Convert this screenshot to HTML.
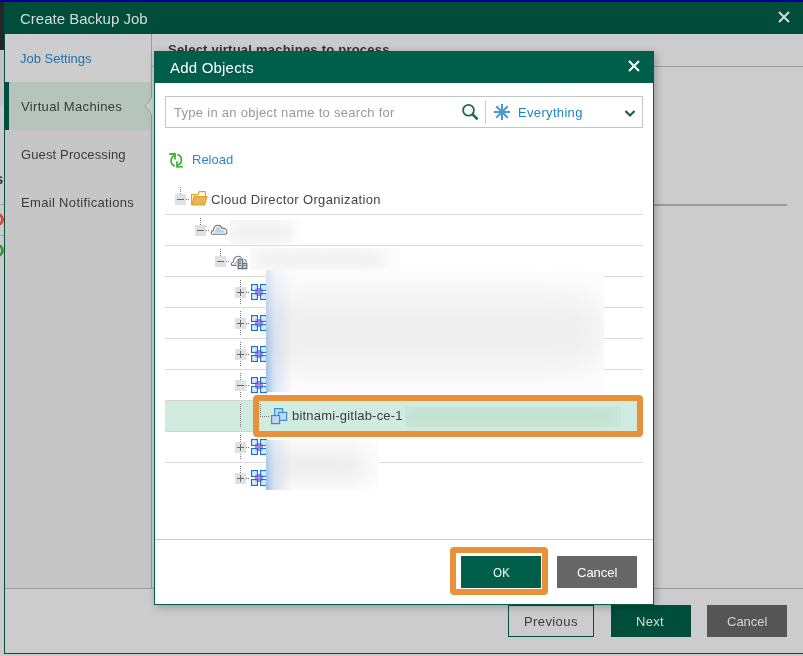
<!DOCTYPE html>
<html><head><meta charset="utf-8">
<style>
*{margin:0;padding:0;box-sizing:border-box}
html,body{width:803px;height:656px;overflow:hidden;background:#cbcbcb;font-family:"Liberation Sans",sans-serif}
.a{position:absolute}
.t{position:absolute;white-space:nowrap;line-height:1;will-change:transform}
</style></head><body>
<!-- background app -->
<div class="a" style="left:0;top:0;width:803px;height:2px;background:#00009a"></div>
<div class="a" style="left:0;top:2px;width:4px;height:48px;background:#262626"></div>
<div class="a" style="left:0;top:50px;width:4px;height:55px;background:#c2c2c2"></div>
<div class="t" style="left:-5px;top:171px;font-size:15px;font-weight:bold;color:#333">s</div>
<div class="a" style="left:0;top:204px;width:4px;height:1px;background:#aaa"></div>
<div class="a" style="left:-9px;top:213px;width:13px;height:13px;border:3px solid #d04a3a;border-radius:50%"></div>
<div class="a" style="left:0;top:235px;width:4px;height:1px;background:#aaa"></div>
<div class="a" style="left:-9px;top:244px;width:13px;height:13px;border:3px solid #3a9a3a;border-radius:50%"></div>

<!-- main dialog -->
<div class="a" style="left:4px;top:2px;width:810px;height:652px;border:1px solid #00503d;background:#cccccc"></div>
<div class="a" style="left:4px;top:2px;width:799px;height:32px;background:#004d3b"></div>
<div class="t" style="left:20px;top:11px;font-size:15px;color:#d5dcd8">Create Backup Job</div>
<svg class="a" style="left:778px;top:11px" width="12" height="12" viewBox="0 0 12 12"><path d="M1 1L11 11M11 1L1 11" stroke="#d8d8d8" stroke-width="2.1"/></svg>

<!-- nav -->
<div class="a" style="left:5px;top:34px;width:146px;height:554px;background:#c6c6c6"></div>
<div class="a" style="left:5px;top:34px;width:146px;height:48px;background:#cdcdcd"></div>
<div class="a" style="left:151px;top:34px;width:1px;height:554px;background:#9a9a9a"></div>
<div class="a" style="left:5px;top:82px;width:146px;height:48px;background:#b5c5bc"></div>
<div class="a" style="left:5px;top:82px;width:4px;height:48px;background:#00503c"></div>
<div class="t" style="left:20px;top:52px;font-size:13px;color:#1f70a8">Job Settings</div>
<div class="t" style="left:21px;top:100px;font-size:13px;letter-spacing:0.33px;color:#3a3a3a">Virtual Machines</div>
<div class="t" style="left:21px;top:148px;font-size:13px;letter-spacing:0.13px;color:#3a3a3a">Guest Processing</div>
<div class="t" style="left:21px;top:196px;font-size:13px;letter-spacing:0.33px;color:#3a3a3a">Email Notifications</div>
<svg class="a" style="left:144px;top:98px" width="9" height="16" viewBox="0 0 9 16"><path d="M7 1L1 8L7 15" fill="#cdcdcd" stroke="#9a9a9a" stroke-width="1"/><rect x="7" y="0" width="2" height="16" fill="#cdcdcd"/></svg>

<!-- right panel -->
<div class="a" style="left:152px;top:66px;width:651px;height:1px;background:#9c9c9c"></div>
<div class="t" style="left:168px;top:43px;font-size:13px;font-weight:bold;letter-spacing:0.23px;color:#333">Select virtual machines to process</div>
<div class="a" style="left:654px;top:204px;width:133px;height:2px;background:#9a9a9a"></div>
<div class="a" style="left:5px;top:588px;width:798px;height:1px;background:#9c9c9c"></div>

<!-- footer buttons -->
<div class="a" style="left:508px;top:605px;width:86px;height:32px;border:1px solid #00503d"></div>
<div class="t" style="left:524px;top:615px;font-size:13px;letter-spacing:0.4px;color:#3a3a3a">Previous</div>
<div class="a" style="left:611px;top:605px;width:80px;height:32px;background:#004d3b"></div>
<div class="t" style="left:636px;top:615px;font-size:13px;letter-spacing:0.3px;color:#d5dcd8">Next</div>
<div class="a" style="left:707px;top:605px;width:80px;height:32px;background:#555555"></div>
<div class="t" style="left:727px;top:615px;font-size:13px;color:#d5d5d5">Cancel</div>

<!-- Add Objects dialog -->
<div class="a" style="left:154px;top:51px;width:500px;height:554px;background:#fff;border:1px solid #005f4b;box-shadow:2px 2px 8px rgba(0,0,0,0.25)"></div>
<div class="a" style="left:154px;top:51px;width:500px;height:32px;background:#005f4b"></div>
<div class="t" style="left:170px;top:60px;font-size:15px;letter-spacing:0.2px;color:#fff">Add Objects</div>
<svg class="a" style="left:628px;top:60px" width="12" height="12" viewBox="0 0 12 12"><path d="M1 1L11 11M11 1L1 11" stroke="#fff" stroke-width="2.1"/></svg>

<!-- search -->
<div class="a" style="left:165px;top:96px;width:478px;height:32px;border:1px solid #c4c4c4"></div>
<div class="t" style="left:174px;top:106px;font-size:13px;letter-spacing:0.29px;color:#999">Type in an object name to search for</div>
<svg class="a" style="left:460px;top:102px" width="20" height="20" viewBox="0 0 20 20"><circle cx="8.5" cy="8.2" r="5.4" fill="none" stroke="#1f6b46" stroke-width="1.8"/><path d="M12.4 12.2L17.6 17.4" stroke="#1f6b46" stroke-width="2.6"/></svg>
<div class="a" style="left:485px;top:101px;width:1px;height:23px;background:#c8c8c8"></div>
<svg class="a" style="left:493px;top:103px" width="18" height="18" viewBox="0 0 18 18"><g stroke="#4a98d0" stroke-width="2"><path d="M9 1V17M1 9H17M3.3 3.3L14.7 14.7M14.7 3.3L3.3 14.7"/></g></svg>
<div class="t" style="left:518px;top:106px;font-size:13px;letter-spacing:0.33px;color:#1f84c2">Everything</div>
<svg class="a" style="left:624px;top:109px" width="12" height="9" viewBox="0 0 12 9"><path d="M1.5 2L6 6.5L10.5 2" fill="none" stroke="#1f5e45" stroke-width="2.2"/></svg>

<!-- reload -->
<svg class="a" style="left:165px;top:150px" width="22" height="20" viewBox="0 0 22 20"><g fill="none" stroke="#3cb43c" stroke-width="1.8"><path d="M9.4 5.6A5.7 5.7 0 0 0 9.8 16.1"/><path d="M12.3 4.7A5.4 5.4 0 0 1 12.3 15.2"/></g><g fill="#3cb43c"><path d="M4.1 3.3L10.9 2.8V9.8L9.2 9.4L9.1 5L4.3 4.9Z"/><path d="M11.1 17.8L18.1 17.5L17.9 15.9L12.9 15.8L12.8 11.2L11.1 11.6Z"/></g></svg>
<div class="t" style="left:192px;top:153px;font-size:13px;color:#2b8ac6">Reload</div>

<!-- tree -->
<!-- TREE START -->
<div class="a" style="left:165px;top:214px;width:478px;height:1px;background:#dadada"></div>
<div class="a" style="left:165px;top:245px;width:478px;height:1px;background:#dadada"></div>
<div class="a" style="left:165px;top:276px;width:478px;height:1px;background:#dadada"></div>
<div class="a" style="left:165px;top:307px;width:478px;height:1px;background:#dadada"></div>
<div class="a" style="left:165px;top:338px;width:478px;height:1px;background:#dadada"></div>
<div class="a" style="left:165px;top:369px;width:478px;height:1px;background:#dadada"></div>
<div class="a" style="left:165px;top:400px;width:478px;height:1px;background:#dadada"></div>
<div class="a" style="left:165px;top:462px;width:478px;height:1px;background:#dadada"></div>
<div class="a" style="left:165px;top:400px;width:478px;height:32px;background:#d0ebdf;border-top:1px solid #d4d4d4;border-bottom:1px solid #d4d4d4"></div>
<div class="a" style="left:180px;top:187px;width:1px;height:1px;background:#7a7a7a"></div><div class="a" style="left:180px;top:189px;width:1px;height:1px;background:#7a7a7a"></div><div class="a" style="left:180px;top:191px;width:1px;height:1px;background:#7a7a7a"></div><div class="a" style="left:180px;top:193px;width:1px;height:1px;background:#7a7a7a"></div>
<div class="a" style="left:175px;top:194px;width:11px;height:11px;background:#dfe2e5"></div>
<div class="a" style="left:177px;top:199px;width:7px;height:1px;background:#6a6a6a"></div>
<div class="a" style="left:186px;top:199px;width:1px;height:1px;background:#7a7a7a"></div>
<div class="a" style="left:188px;top:199px;width:1px;height:1px;background:#7a7a7a"></div>
<svg class="a" style="left:191px;top:191px" width="17" height="15" viewBox="0 0 17 15"><path d="M0.6 13.8V3.6H7L8.4 0.6H14.3V5.2" fill="none" stroke="#e3a12a" stroke-width="1.2"/><path d="M3.1 5.7H15.9L13.6 13.9H0.9Z" fill="#e7b65a" stroke="#e3a12a" stroke-width="1.2" stroke-linejoin="round"/></svg>
<div class="a" style="left:200px;top:218px;width:1px;height:1px;background:#7a7a7a"></div><div class="a" style="left:200px;top:220px;width:1px;height:1px;background:#7a7a7a"></div><div class="a" style="left:200px;top:222px;width:1px;height:1px;background:#7a7a7a"></div><div class="a" style="left:200px;top:224px;width:1px;height:1px;background:#7a7a7a"></div>
<div class="a" style="left:195px;top:225px;width:11px;height:11px;background:#dfe2e5"></div>
<div class="a" style="left:197px;top:230px;width:7px;height:1px;background:#6a6a6a"></div>
<div class="a" style="left:206px;top:230px;width:1px;height:1px;background:#7a7a7a"></div>
<div class="a" style="left:208px;top:230px;width:1px;height:1px;background:#7a7a7a"></div>
<svg class="a" style="left:210px;top:224px" width="18" height="12" viewBox="0 0 18 12"><path d="M2.6 10.3C0.6 10.3 0.8 6.6 3.3 6.6C3.8 2.5 6 1.2 8.1 1.3C10 1.3 11.2 2.6 11.8 4.2C14.5 3.8 17 5.3 16.9 7.8C16.9 9.3 16.2 10.3 15 10.3Z" fill="#fff" stroke="#707070" stroke-width="1.1"/><path d="M3.4 8.7C3.4 7.6 4.2 7.6 4.8 7.5C5.4 4.5 6.5 2.8 8 2.8C9.3 2.8 10.3 4.2 10.8 5.6C12.8 5.6 14.8 6.8 14.8 8.7Z" fill="#b5d2ee"/></svg>
<div class="a" style="left:220px;top:249px;width:1px;height:1px;background:#7a7a7a"></div><div class="a" style="left:220px;top:251px;width:1px;height:1px;background:#7a7a7a"></div><div class="a" style="left:220px;top:253px;width:1px;height:1px;background:#7a7a7a"></div><div class="a" style="left:220px;top:255px;width:1px;height:1px;background:#7a7a7a"></div>
<div class="a" style="left:215px;top:256px;width:11px;height:11px;background:#dfe2e5"></div>
<div class="a" style="left:217px;top:261px;width:7px;height:1px;background:#6a6a6a"></div>
<div class="a" style="left:226px;top:261px;width:1px;height:1px;background:#7a7a7a"></div>
<div class="a" style="left:228px;top:261px;width:1px;height:1px;background:#7a7a7a"></div>
<svg class="a" style="left:229px;top:254px" width="19" height="16" viewBox="0 0 19 16"><path d="M7.7 11.4H3.4C1.9 11.4 1.9 8.6 4 8.3C4.7 4.6 6.5 2.2 9 2.2C10.5 2.2 11.8 2.9 12.6 3.6" fill="none" stroke="#707070" stroke-width="1.1"/><path d="M15.4 5L17.6 7.7" stroke="#707070" stroke-width="1.1"/><path d="M4.6 9.9L7.9 5.6V9.9Z" fill="#b5d2ee"/><rect x="9.2" y="5.2" width="4.4" height="9.4" fill="#b8dcf8" stroke="#707070" stroke-width="1.3"/><rect x="13.6" y="9.3" width="4.1" height="5.3" fill="#b8dcf8" stroke="#707070" stroke-width="1.3"/><path d="M9.2 7.3H12.2M9.2 9.4H12.2M9.2 11.4H12.2M13.6 11.4H16.5" stroke="#707070" stroke-width="1"/></svg>
<div class="a" style="left:240px;top:280px;width:1px;height:1px;background:#7a7a7a"></div><div class="a" style="left:240px;top:282px;width:1px;height:1px;background:#7a7a7a"></div><div class="a" style="left:240px;top:284px;width:1px;height:1px;background:#7a7a7a"></div><div class="a" style="left:240px;top:286px;width:1px;height:1px;background:#7a7a7a"></div>
<div class="a" style="left:240px;top:299px;width:1px;height:1px;background:#7a7a7a"></div><div class="a" style="left:240px;top:301px;width:1px;height:1px;background:#7a7a7a"></div><div class="a" style="left:240px;top:303px;width:1px;height:1px;background:#7a7a7a"></div>
<div class="a" style="left:235px;top:287px;width:11px;height:11px;background:#dfe2e5"></div>
<div class="a" style="left:237px;top:292px;width:7px;height:1px;background:#6a6a6a"></div>
<div class="a" style="left:240px;top:289px;width:1px;height:7px;background:#6a6a6a"></div>
<div class="a" style="left:246px;top:292px;width:1px;height:1px;background:#7a7a7a"></div>
<div class="a" style="left:248px;top:292px;width:1px;height:1px;background:#7a7a7a"></div>
<svg class="a" style="left:251px;top:284px" width="17" height="17" viewBox="0 0 17 17"><rect x="4" y="4" width="8" height="8" fill="#ac82e6"/><rect x="0.6" y="0.6" width="5.8" height="5.8" fill="#fff" fill-opacity="0.5" stroke="#1a70d0" stroke-width="1.2"/><rect x="2" y="2" width="3" height="3" fill="#b8e8ef" fill-opacity="0.75"/><rect x="9.6" y="0.6" width="5.8" height="5.8" fill="#fff" fill-opacity="0.5" stroke="#1a70d0" stroke-width="1.2"/><rect x="11" y="2" width="3" height="3" fill="#b8e8ef" fill-opacity="0.75"/><rect x="0.6" y="9.6" width="5.8" height="5.8" fill="#fff" fill-opacity="0.5" stroke="#1a70d0" stroke-width="1.2"/><rect x="2" y="11" width="3" height="3" fill="#b8e8ef" fill-opacity="0.75"/><rect x="9.6" y="9.6" width="5.8" height="5.8" fill="#fff" fill-opacity="0.5" stroke="#1a70d0" stroke-width="1.2"/><rect x="11" y="11" width="3" height="3" fill="#b8e8ef" fill-opacity="0.75"/></svg>
<div class="a" style="left:240px;top:311px;width:1px;height:1px;background:#7a7a7a"></div><div class="a" style="left:240px;top:313px;width:1px;height:1px;background:#7a7a7a"></div><div class="a" style="left:240px;top:315px;width:1px;height:1px;background:#7a7a7a"></div><div class="a" style="left:240px;top:317px;width:1px;height:1px;background:#7a7a7a"></div>
<div class="a" style="left:240px;top:330px;width:1px;height:1px;background:#7a7a7a"></div><div class="a" style="left:240px;top:332px;width:1px;height:1px;background:#7a7a7a"></div><div class="a" style="left:240px;top:334px;width:1px;height:1px;background:#7a7a7a"></div>
<div class="a" style="left:235px;top:318px;width:11px;height:11px;background:#dfe2e5"></div>
<div class="a" style="left:237px;top:323px;width:7px;height:1px;background:#6a6a6a"></div>
<div class="a" style="left:240px;top:320px;width:1px;height:7px;background:#6a6a6a"></div>
<div class="a" style="left:246px;top:323px;width:1px;height:1px;background:#7a7a7a"></div>
<div class="a" style="left:248px;top:323px;width:1px;height:1px;background:#7a7a7a"></div>
<svg class="a" style="left:251px;top:315px" width="17" height="17" viewBox="0 0 17 17"><rect x="4" y="4" width="8" height="8" fill="#ac82e6"/><rect x="0.6" y="0.6" width="5.8" height="5.8" fill="#fff" fill-opacity="0.5" stroke="#1a70d0" stroke-width="1.2"/><rect x="2" y="2" width="3" height="3" fill="#b8e8ef" fill-opacity="0.75"/><rect x="9.6" y="0.6" width="5.8" height="5.8" fill="#fff" fill-opacity="0.5" stroke="#1a70d0" stroke-width="1.2"/><rect x="11" y="2" width="3" height="3" fill="#b8e8ef" fill-opacity="0.75"/><rect x="0.6" y="9.6" width="5.8" height="5.8" fill="#fff" fill-opacity="0.5" stroke="#1a70d0" stroke-width="1.2"/><rect x="2" y="11" width="3" height="3" fill="#b8e8ef" fill-opacity="0.75"/><rect x="9.6" y="9.6" width="5.8" height="5.8" fill="#fff" fill-opacity="0.5" stroke="#1a70d0" stroke-width="1.2"/><rect x="11" y="11" width="3" height="3" fill="#b8e8ef" fill-opacity="0.75"/></svg>
<div class="a" style="left:240px;top:342px;width:1px;height:1px;background:#7a7a7a"></div><div class="a" style="left:240px;top:344px;width:1px;height:1px;background:#7a7a7a"></div><div class="a" style="left:240px;top:346px;width:1px;height:1px;background:#7a7a7a"></div><div class="a" style="left:240px;top:348px;width:1px;height:1px;background:#7a7a7a"></div>
<div class="a" style="left:240px;top:361px;width:1px;height:1px;background:#7a7a7a"></div><div class="a" style="left:240px;top:363px;width:1px;height:1px;background:#7a7a7a"></div><div class="a" style="left:240px;top:365px;width:1px;height:1px;background:#7a7a7a"></div>
<div class="a" style="left:235px;top:349px;width:11px;height:11px;background:#dfe2e5"></div>
<div class="a" style="left:237px;top:354px;width:7px;height:1px;background:#6a6a6a"></div>
<div class="a" style="left:240px;top:351px;width:1px;height:7px;background:#6a6a6a"></div>
<div class="a" style="left:246px;top:354px;width:1px;height:1px;background:#7a7a7a"></div>
<div class="a" style="left:248px;top:354px;width:1px;height:1px;background:#7a7a7a"></div>
<svg class="a" style="left:251px;top:346px" width="17" height="17" viewBox="0 0 17 17"><rect x="4" y="4" width="8" height="8" fill="#ac82e6"/><rect x="0.6" y="0.6" width="5.8" height="5.8" fill="#fff" fill-opacity="0.5" stroke="#1a70d0" stroke-width="1.2"/><rect x="2" y="2" width="3" height="3" fill="#b8e8ef" fill-opacity="0.75"/><rect x="9.6" y="0.6" width="5.8" height="5.8" fill="#fff" fill-opacity="0.5" stroke="#1a70d0" stroke-width="1.2"/><rect x="11" y="2" width="3" height="3" fill="#b8e8ef" fill-opacity="0.75"/><rect x="0.6" y="9.6" width="5.8" height="5.8" fill="#fff" fill-opacity="0.5" stroke="#1a70d0" stroke-width="1.2"/><rect x="2" y="11" width="3" height="3" fill="#b8e8ef" fill-opacity="0.75"/><rect x="9.6" y="9.6" width="5.8" height="5.8" fill="#fff" fill-opacity="0.5" stroke="#1a70d0" stroke-width="1.2"/><rect x="11" y="11" width="3" height="3" fill="#b8e8ef" fill-opacity="0.75"/></svg>
<div class="a" style="left:240px;top:373px;width:1px;height:1px;background:#7a7a7a"></div><div class="a" style="left:240px;top:375px;width:1px;height:1px;background:#7a7a7a"></div><div class="a" style="left:240px;top:377px;width:1px;height:1px;background:#7a7a7a"></div><div class="a" style="left:240px;top:379px;width:1px;height:1px;background:#7a7a7a"></div>
<div class="a" style="left:240px;top:392px;width:1px;height:1px;background:#7a7a7a"></div><div class="a" style="left:240px;top:394px;width:1px;height:1px;background:#7a7a7a"></div><div class="a" style="left:240px;top:396px;width:1px;height:1px;background:#7a7a7a"></div>
<div class="a" style="left:235px;top:380px;width:11px;height:11px;background:#dfe2e5"></div>
<div class="a" style="left:237px;top:385px;width:7px;height:1px;background:#6a6a6a"></div>
<div class="a" style="left:246px;top:385px;width:1px;height:1px;background:#7a7a7a"></div>
<div class="a" style="left:248px;top:385px;width:1px;height:1px;background:#7a7a7a"></div>
<svg class="a" style="left:251px;top:377px" width="17" height="17" viewBox="0 0 17 17"><rect x="4" y="4" width="8" height="8" fill="#ac82e6"/><rect x="0.6" y="0.6" width="5.8" height="5.8" fill="#fff" fill-opacity="0.5" stroke="#1a70d0" stroke-width="1.2"/><rect x="2" y="2" width="3" height="3" fill="#b8e8ef" fill-opacity="0.75"/><rect x="9.6" y="0.6" width="5.8" height="5.8" fill="#fff" fill-opacity="0.5" stroke="#1a70d0" stroke-width="1.2"/><rect x="11" y="2" width="3" height="3" fill="#b8e8ef" fill-opacity="0.75"/><rect x="0.6" y="9.6" width="5.8" height="5.8" fill="#fff" fill-opacity="0.5" stroke="#1a70d0" stroke-width="1.2"/><rect x="2" y="11" width="3" height="3" fill="#b8e8ef" fill-opacity="0.75"/><rect x="9.6" y="9.6" width="5.8" height="5.8" fill="#fff" fill-opacity="0.5" stroke="#1a70d0" stroke-width="1.2"/><rect x="11" y="11" width="3" height="3" fill="#b8e8ef" fill-opacity="0.75"/></svg>
<svg class="a" style="left:271px;top:408px" width="17" height="17" viewBox="0 0 17 17"><g fill="#c3d8f0" stroke="#3a8fd2" stroke-width="1.2"><rect x="3.6" y="0.6" width="8" height="8"/><rect x="7.6" y="4.4" width="8" height="8"/><rect x="0.6" y="7.6" width="8" height="8"/></g></svg>
<div class="a" style="left:240px;top:435px;width:1px;height:1px;background:#7a7a7a"></div><div class="a" style="left:240px;top:437px;width:1px;height:1px;background:#7a7a7a"></div><div class="a" style="left:240px;top:439px;width:1px;height:1px;background:#7a7a7a"></div><div class="a" style="left:240px;top:441px;width:1px;height:1px;background:#7a7a7a"></div>
<div class="a" style="left:240px;top:454px;width:1px;height:1px;background:#7a7a7a"></div><div class="a" style="left:240px;top:456px;width:1px;height:1px;background:#7a7a7a"></div><div class="a" style="left:240px;top:458px;width:1px;height:1px;background:#7a7a7a"></div>
<div class="a" style="left:235px;top:442px;width:11px;height:11px;background:#dfe2e5"></div>
<div class="a" style="left:237px;top:447px;width:7px;height:1px;background:#6a6a6a"></div>
<div class="a" style="left:240px;top:444px;width:1px;height:7px;background:#6a6a6a"></div>
<div class="a" style="left:246px;top:447px;width:1px;height:1px;background:#7a7a7a"></div>
<div class="a" style="left:248px;top:447px;width:1px;height:1px;background:#7a7a7a"></div>
<svg class="a" style="left:251px;top:439px" width="17" height="17" viewBox="0 0 17 17"><rect x="4" y="4" width="8" height="8" fill="#ac82e6"/><rect x="0.6" y="0.6" width="5.8" height="5.8" fill="#fff" fill-opacity="0.5" stroke="#1a70d0" stroke-width="1.2"/><rect x="2" y="2" width="3" height="3" fill="#b8e8ef" fill-opacity="0.75"/><rect x="9.6" y="0.6" width="5.8" height="5.8" fill="#fff" fill-opacity="0.5" stroke="#1a70d0" stroke-width="1.2"/><rect x="11" y="2" width="3" height="3" fill="#b8e8ef" fill-opacity="0.75"/><rect x="0.6" y="9.6" width="5.8" height="5.8" fill="#fff" fill-opacity="0.5" stroke="#1a70d0" stroke-width="1.2"/><rect x="2" y="11" width="3" height="3" fill="#b8e8ef" fill-opacity="0.75"/><rect x="9.6" y="9.6" width="5.8" height="5.8" fill="#fff" fill-opacity="0.5" stroke="#1a70d0" stroke-width="1.2"/><rect x="11" y="11" width="3" height="3" fill="#b8e8ef" fill-opacity="0.75"/></svg>
<div class="a" style="left:240px;top:466px;width:1px;height:1px;background:#7a7a7a"></div><div class="a" style="left:240px;top:468px;width:1px;height:1px;background:#7a7a7a"></div><div class="a" style="left:240px;top:470px;width:1px;height:1px;background:#7a7a7a"></div><div class="a" style="left:240px;top:472px;width:1px;height:1px;background:#7a7a7a"></div>
<div class="a" style="left:235px;top:473px;width:11px;height:11px;background:#dfe2e5"></div>
<div class="a" style="left:237px;top:478px;width:7px;height:1px;background:#6a6a6a"></div>
<div class="a" style="left:240px;top:475px;width:1px;height:7px;background:#6a6a6a"></div>
<div class="a" style="left:246px;top:478px;width:1px;height:1px;background:#7a7a7a"></div>
<div class="a" style="left:248px;top:478px;width:1px;height:1px;background:#7a7a7a"></div>
<svg class="a" style="left:251px;top:470px" width="17" height="17" viewBox="0 0 17 17"><rect x="4" y="4" width="8" height="8" fill="#ac82e6"/><rect x="0.6" y="0.6" width="5.8" height="5.8" fill="#fff" fill-opacity="0.5" stroke="#1a70d0" stroke-width="1.2"/><rect x="2" y="2" width="3" height="3" fill="#b8e8ef" fill-opacity="0.75"/><rect x="9.6" y="0.6" width="5.8" height="5.8" fill="#fff" fill-opacity="0.5" stroke="#1a70d0" stroke-width="1.2"/><rect x="11" y="2" width="3" height="3" fill="#b8e8ef" fill-opacity="0.75"/><rect x="0.6" y="9.6" width="5.8" height="5.8" fill="#fff" fill-opacity="0.5" stroke="#1a70d0" stroke-width="1.2"/><rect x="2" y="11" width="3" height="3" fill="#b8e8ef" fill-opacity="0.75"/><rect x="9.6" y="9.6" width="5.8" height="5.8" fill="#fff" fill-opacity="0.5" stroke="#1a70d0" stroke-width="1.2"/><rect x="11" y="11" width="3" height="3" fill="#b8e8ef" fill-opacity="0.75"/></svg>
<div class="a" style="left:240px;top:404px;width:1px;height:1px;background:#7a7a7a"></div><div class="a" style="left:240px;top:406px;width:1px;height:1px;background:#7a7a7a"></div><div class="a" style="left:240px;top:408px;width:1px;height:1px;background:#7a7a7a"></div><div class="a" style="left:240px;top:410px;width:1px;height:1px;background:#7a7a7a"></div><div class="a" style="left:240px;top:412px;width:1px;height:1px;background:#7a7a7a"></div><div class="a" style="left:240px;top:414px;width:1px;height:1px;background:#7a7a7a"></div><div class="a" style="left:240px;top:416px;width:1px;height:1px;background:#7a7a7a"></div><div class="a" style="left:240px;top:418px;width:1px;height:1px;background:#7a7a7a"></div><div class="a" style="left:240px;top:420px;width:1px;height:1px;background:#7a7a7a"></div><div class="a" style="left:240px;top:422px;width:1px;height:1px;background:#7a7a7a"></div><div class="a" style="left:240px;top:424px;width:1px;height:1px;background:#7a7a7a"></div><div class="a" style="left:240px;top:426px;width:1px;height:1px;background:#7a7a7a"></div>
<div class="a" style="left:260px;top:404px;width:1px;height:1px;background:#7a7a7a"></div><div class="a" style="left:260px;top:406px;width:1px;height:1px;background:#7a7a7a"></div><div class="a" style="left:260px;top:408px;width:1px;height:1px;background:#7a7a7a"></div><div class="a" style="left:260px;top:410px;width:1px;height:1px;background:#7a7a7a"></div><div class="a" style="left:260px;top:412px;width:1px;height:1px;background:#7a7a7a"></div><div class="a" style="left:260px;top:414px;width:1px;height:1px;background:#7a7a7a"></div><div class="a" style="left:260px;top:416px;width:1px;height:1px;background:#7a7a7a"></div>
<div class="a" style="left:262px;top:416px;width:1px;height:1px;background:#7a7a7a"></div><div class="a" style="left:264px;top:416px;width:1px;height:1px;background:#7a7a7a"></div><div class="a" style="left:266px;top:416px;width:1px;height:1px;background:#7a7a7a"></div><div class="a" style="left:268px;top:416px;width:1px;height:1px;background:#7a7a7a"></div>
<div class="t" style="left:292px;top:409px;font-size:13px;letter-spacing:0.2px;color:#3c3c3c">bitnami-gitlab-ce-1</div>
<div class="t" style="left:211px;top:193px;font-size:13px;letter-spacing:0.35px;color:#444">Cloud Director Organization</div>
<div class="a" style="left:230px;top:220px;width:76px;height:24px;overflow:hidden;background:linear-gradient(to right,#f8f8f8,#f7f7f7 60%,#fff 100%)"><div class="a" style="left:6px;top:7px;width:55px;height:11px;background:#eeeeee;filter:blur(5px)"></div></div>
<div class="a" style="left:250px;top:248px;width:151px;height:22px;overflow:hidden;background:linear-gradient(to right,#f9f9f9,#f8f8f8 70%,#fdfdfd 100%)"><div class="a" style="left:8px;top:6px;width:125px;height:11px;background:#efefef;filter:blur(5px)"></div></div>
<div class="a" style="left:266px;top:270px;width:338px;height:122px;overflow:hidden;background:#fdfdfd"><div class="a" style="left:-20px;top:24px;width:360px;height:76px;background:#efefef;border-radius:38px;filter:blur(14px)"></div><div class="a" style="left:0;top:0;width:40px;height:122px;background:linear-gradient(to right,rgba(135,178,230,0.85) 0,rgba(180,205,235,0.5) 8px,rgba(230,235,240,0) 26px);-webkit-mask-image:linear-gradient(to bottom,rgba(0,0,0,0.35) 0,rgba(0,0,0,0.8) 50%,#000 100%)"></div></div>
<div class="a" style="left:266px;top:440px;width:113px;height:50px;overflow:hidden;background:#fdfdfd"><div class="a" style="left:-10px;top:8px;width:112px;height:34px;background:#eeeeee;border-radius:17px;filter:blur(9px)"></div><div class="a" style="left:0;top:0;width:40px;height:50px;background:linear-gradient(to right,rgba(135,178,230,0.85) 0,rgba(180,205,235,0.5) 8px,rgba(230,235,240,0) 26px);-webkit-mask-image:linear-gradient(to bottom,rgba(0,0,0,0.6) 0,#000 100%)"></div></div>
<div class="a" style="left:405px;top:407px;width:216px;height:20px;overflow:hidden;background:#cbe6d9"><div class="a" style="left:4px;top:4px;width:200px;height:12px;background:#c2dfd0;filter:blur(5px)"></div></div>
<div class="a" style="left:253px;top:395px;width:390px;height:42px;border:6px solid #e8913a;border-radius:4px"></div>
<!-- TREE END -->

<!-- dialog footer -->
<div class="a" style="left:155px;top:539px;width:498px;height:1px;background:#c8c8c8"></div>
<div class="a" style="left:450px;top:547px;width:98px;height:48px;border:6px solid #e8913a;border-radius:4px"></div>
<div class="a" style="left:461px;top:556px;width:80px;height:32px;background:#005f4b"></div>
<div class="t" style="left:493px;top:566px;font-size:13px;transform:scaleX(0.9);transform-origin:0 0;color:#fff">OK</div>
<div class="a" style="left:557px;top:556px;width:80px;height:32px;background:#666666"></div>
<div class="t" style="left:577px;top:566px;font-size:13px;color:#fff">Cancel</div>
</body></html>
